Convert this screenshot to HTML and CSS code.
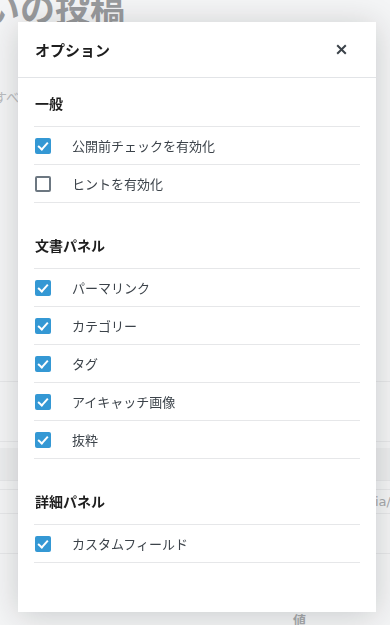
FILE: index.html
```html
<!DOCTYPE html>
<html lang="ja">
<head>
  <meta charset="utf-8">
  <title>オプション</title>
  <link rel="stylesheet" href="styles.css">
</head>
<body>
  <!-- the editor page behind the modal -->
  <div class="page">
    <h1 class="page-title">いの投稿</h1>
    <p class="page-desc">すべて</p>
    <div class="page-table">
      <div class="tr tr-tall"></div>
      <div class="tr-space"></div>
      <div class="tr tr-head"></div>
      <div class="tr tr-thin"></div>
      <div class="tr tr-text"><span>media/(</span></div>
      <div class="tr tr-tall2"></div>
    </div>
    <div class="page-foot">値</div>
  </div>

  <div class="overlay">
    <div class="modal">
      <div class="modal-header">
        <h2 class="modal-title">オプション</h2>
        <button class="modal-close" aria-label="閉じる">
          <svg width="11" height="11" viewBox="0 0 11 11">
            <path d="M1.2 1.2 L9.8 9.8 M9.8 1.2 L1.2 9.8" stroke="#3c434a" stroke-width="2" fill="none"/>
          </svg>
        </button>
      </div>

      <div class="modal-body">
        <section class="section">
          <h3 class="section-title">一般</h3>
          <label class="option"><span class="box checked"></span>公開前チェックを有効化</label>
          <label class="option"><span class="box"></span>ヒントを有効化</label>
        </section>

        <section class="section">
          <h3 class="section-title">文書パネル</h3>
          <label class="option"><span class="box checked"></span>パーマリンク</label>
          <label class="option"><span class="box checked"></span>カテゴリー</label>
          <label class="option"><span class="box checked"></span>タグ</label>
          <label class="option"><span class="box checked"></span>アイキャッチ画像</label>
          <label class="option"><span class="box checked"></span>抜粋</label>
        </section>

        <section class="section">
          <h3 class="section-title">詳細パネル</h3>
          <label class="option"><span class="box checked"></span>カスタムフィールド</label>
        </section>
      </div>
    </div>
  </div>
</body>
</html>
```

FILE: styles.css
```css
/* page behind the modal */
body {
  margin: 0;
  height: 625px;
  overflow: hidden;
  background-color: #f1f2f3;
  font-family: "Noto Sans CJK JP", "Noto Sans", sans-serif;
}

.page {
  color: #8a8d90;
}

.page-title {
  margin: -13px 0 0 -15px;
  font-size: 35px;
  line-height: 40px;
  font-weight: 700;
  color: #77797c;
  white-space: nowrap;
}

.page-desc {
  margin: 61px 0 0 -6px;
  font-size: 13px;
  line-height: 18px;
  color: #a5a7aa;
}

.page-table {
  margin-top: 275px;
  border-top: 1px solid #dfe0e2;
}

.tr {
  border-bottom: 1px solid #dfe0e2;
}

.tr-tall {
  height: 59px;
}

.tr-space {
  height: 6px;
}

.tr-head {
  height: 32px;
  background-color: #e7e8e9;
}

.tr-thin {
  height: 8px;
}

.tr-text {
  height: 23px;
  display: flex;
  justify-content: flex-end;
  align-items: center;
  font-family: "DejaVu Sans", sans-serif;
  font-size: 13px;
  color: #8a8d90;
  margin-right: -6px;
}

.tr-tall2 {
  height: 39px;
}

.page-foot {
  margin: 56px 0 0 293px;
  font-size: 13px;
  font-weight: 700;
  color: #8a8d90;
}

/* modal */
.overlay {
  position: fixed;
  inset: 0;
  background-color: rgba(255, 255, 255, 0.25);
}

.modal {
  position: absolute;
  left: 18px;
  top: 22px;
  width: 358px;
  height: 590px;
  background-color: white;
  box-shadow: 0 3px 30px rgba(25, 30, 35, 0.2);
  color: #23282d;
}

.modal-header {
  height: 55px;
  padding: 0 23px 0 17px;
  border-bottom: 1px solid #e2e4e7;
  display: flex;
  align-items: center;
  justify-content: space-between;
}

.modal-title {
  margin: 0;
  font-size: 15px;
  font-weight: 700;
  color: #1e1e1e;
}

.modal-close {
  width: 24px;
  height: 24px;
  padding: 0;
  border: none;
  background: none;
  display: flex;
  align-items: center;
  justify-content: center;
}

.modal-body {
  padding: 0 16px;
}

.section {
  padding-top: 15px;
}

.section + .section {
  padding-top: 32px;
}

.section-title {
  margin: 0;
  padding-left: 1px;
  height: 34px;
  box-sizing: border-box;
  border-bottom: 1px solid #e6e7e9;
  font-size: 14px;
  line-height: 20px;
  font-weight: 700;
  color: #1e1e1e;
}

.option {
  height: 38px;
  border-bottom: 1px solid #e6e7e9;
  box-sizing: border-box;
  display: flex;
  align-items: center;
  font-size: 13px;
  color: #3c434a;
}

.box {
  width: 16px;
  height: 16px;
  margin: 0 21px 0 1px;
  box-sizing: border-box;
  border: 2px solid #6c7781;
  border-radius: 2px;
  position: relative;
}

.box.checked {
  border: none;
  background-color: #3498d4;
}

.box.checked::after {
  content: "";
  position: absolute;
  left: 5px;
  top: 2px;
  width: 4px;
  height: 8px;
  border: solid white;
  border-width: 0 2.5px 2.5px 0;
  transform: rotate(42deg);
}
```
